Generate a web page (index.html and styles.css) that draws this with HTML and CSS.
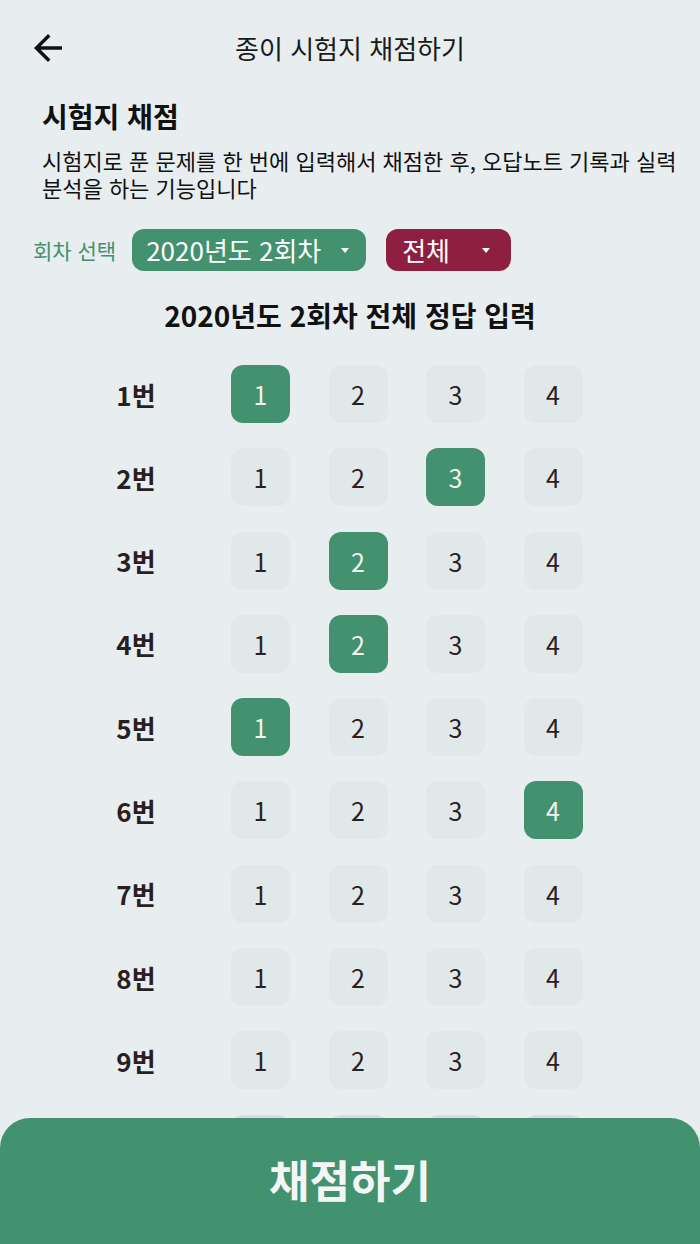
FILE: index.html
```html
<!DOCTYPE html>
<html lang="ko">
<head>
<meta charset="utf-8">
<title>종이 시험지 채점하기</title>
<link rel="stylesheet" href="styles.css">
</head>
<body>
<div class="app">
  <header class="topbar">
    <div class="back">
      <svg class="back-icon" viewBox="0 0 24 24" width="42" height="42"><path d="M20 11H7.83l5.59-5.59L12 4l-8 8 8 8 1.41-1.41L7.83 13H20v-2z" fill="#111"/></svg>
    </div>
    <div class="topbar-title">종이 시험지 채점하기</div>
    <div></div>
  </header>

  <section class="intro">
    <h1 class="intro-title">시험지 채점</h1>
    <p class="intro-desc">시험지로 푼 문제를 한 번에 입력해서 채점한 후, 오답노트 기록과 실력 분석을 하는 기능입니다</p>
  </section>

  <div class="selector">
    <span class="selector-label">회차 선택</span>
    <div class="dropdown dropdown-green"><span>2020년도 2회차</span><i class="caret"></i></div>
    <div class="dropdown dropdown-red"><span>전체</span><i class="caret"></i></div>
  </div>

  <h2 class="answers-title">2020년도 2회차 전체 정답 입력</h2>

  <div class="answers">
    <div class="row"><span class="qnum">1번</span><span class="opt on">1</span><span class="opt">2</span><span class="opt">3</span><span class="opt">4</span></div>
    <div class="row"><span class="qnum">2번</span><span class="opt">1</span><span class="opt">2</span><span class="opt on">3</span><span class="opt">4</span></div>
    <div class="row"><span class="qnum">3번</span><span class="opt">1</span><span class="opt on">2</span><span class="opt">3</span><span class="opt">4</span></div>
    <div class="row"><span class="qnum">4번</span><span class="opt">1</span><span class="opt on">2</span><span class="opt">3</span><span class="opt">4</span></div>
    <div class="row"><span class="qnum">5번</span><span class="opt on">1</span><span class="opt">2</span><span class="opt">3</span><span class="opt">4</span></div>
    <div class="row"><span class="qnum">6번</span><span class="opt">1</span><span class="opt">2</span><span class="opt">3</span><span class="opt on">4</span></div>
    <div class="row"><span class="qnum">7번</span><span class="opt">1</span><span class="opt">2</span><span class="opt">3</span><span class="opt">4</span></div>
    <div class="row"><span class="qnum">8번</span><span class="opt">1</span><span class="opt">2</span><span class="opt">3</span><span class="opt">4</span></div>
    <div class="row"><span class="qnum">9번</span><span class="opt">1</span><span class="opt">2</span><span class="opt">3</span><span class="opt">4</span></div>
    <div class="row row-peek"><span class="qnum"></span><span class="opt"></span><span class="opt"></span><span class="opt"></span><span class="opt"></span></div>
  </div>

  <button class="submit">채점하기</button>
</div>
</body>
</html>
```

FILE: styles.css
```css
* { box-sizing: border-box; }
html, body {
  margin: 0;
  padding: 0;
  background: #e8eef0;
  font-family: "Noto Sans CJK KR", "Noto Sans", sans-serif;
  color: #111;
}
.app {
  width: 700px;
  min-height: 1244px;
  overflow: hidden;
}
.topbar {
  height: 96px;
  display: grid;
  grid-template-columns: 1fr auto 1fr;
  align-items: center;
}
.back {
  padding-left: 27px;
  display: flex;
  align-items: center;
}
.back-icon { display: block; }
.topbar-title {
  font-size: 26px;
  line-height: 32px;
  color: #1a1a1a;
}
.intro {
  padding: 2px 20px 0 42px;
}
.intro-title {
  margin: 0;
  font-size: 28px;
  line-height: 36px;
  font-weight: 700;
}
.intro-desc {
  margin: 13px 0 0;
  font-size: 22px;
  line-height: 27px;
  word-break: keep-all;
}
.selector {
  margin-top: 28px;
  padding-left: 33px;
  display: flex;
  align-items: center;
  gap: 16px;
}
.selector-label {
  font-size: 21px;
  color: #43916f;
}
.dropdown {
  height: 42px;
  border-radius: 12px;
  display: flex;
  align-items: center;
  justify-content: space-between;
  color: #fff;
  font-size: 26px;
  line-height: 30px;
}
.dropdown-green {
  width: 234px;
  background: #43916f;
  padding: 0 17px 0 14px;
}
.dropdown-red {
  width: 125px;
  margin-left: 4px;
  background: #8f1f40;
  padding: 0 21px 0 16px;
}
.caret {
  width: 0;
  height: 0;
  border-left: 4px solid transparent;
  border-right: 4px solid transparent;
  border-top: 5px solid #fff;
}
.answers-title {
  margin: 26px 0 0;
  text-align: center;
  font-size: 28px;
  line-height: 36px;
  font-weight: 700;
}
.answers {
  margin-top: 32px;
  display: flex;
  flex-direction: column;
  gap: 25.3px;
}
.row {
  display: flex;
  align-items: center;
  padding-left: 96px;
}
.qnum {
  width: 80px;
  margin-right: 55px;
  text-align: center;
  font-size: 26px;
  font-weight: 700;
  color: #2a1f1f;
}
.opt {
  width: 59px;
  height: 58px;
  margin-right: 38.5px;
  border-radius: 12px;
  background: #e1e8ea;
  display: flex;
  align-items: center;
  justify-content: center;
  font-size: 25px;
  color: #2b2020;
}
.opt.on {
  background: #43916f;
  color: #f2f2f2;
}
.row-peek .opt {
  background: #d7dbe5;
}
.submit {
  position: fixed;
  left: 0;
  bottom: 0;
  width: 700px;
  height: 126px;
  border: 0;
  border-radius: 30px 30px 0 0;
  background: #43926f;
  color: #f4f6f6;
  font-family: inherit;
  font-size: 44px;
  font-weight: 700;
  padding: 0 0 4px;
}
```
